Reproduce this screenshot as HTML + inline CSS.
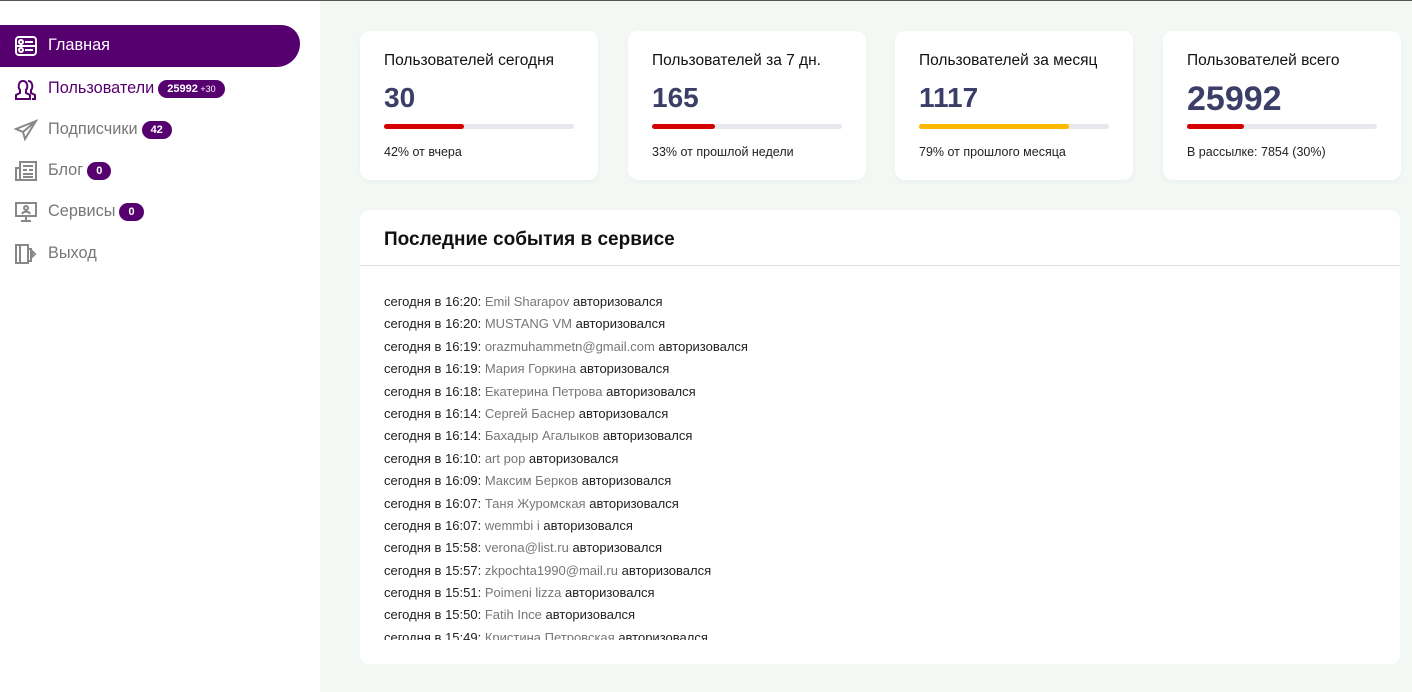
<!DOCTYPE html>
<html><head><meta charset="utf-8"><style>
*{margin:0;padding:0;box-sizing:border-box}
body{width:1412px;height:691px;overflow:hidden;background:#f4f8f5;font-family:"Liberation Sans",sans-serif;position:relative;border-top:1px solid #555}
.side{position:absolute;left:0;top:0;width:320px;height:691px;background:#fff}
.act{position:absolute;left:0;top:24px;width:300px;height:42px;background:#560070;border-radius:0 22px 28px 0;color:#fff}
.nav{position:absolute;left:48px;font-size:16.3px;color:#777;display:flex;align-items:center}
.badge{background:#560070;color:#fff;font-size:11px;font-weight:bold;border-radius:10px;padding:3px 9px;margin-left:4px}
.ic{position:absolute;left:14px;width:24px;height:22px}
.card{position:absolute;top:30px;width:238px;height:149px;background:#fff;border-radius:10px;padding:0 24px;box-shadow:0 2px 6px rgba(0,0,0,.03)}
.card h4{font-weight:normal;font-size:15.5px;color:#111;margin-top:21px}
.card .n{font-size:28px;font-weight:bold;color:#3b3e66;margin-top:12px;height:34px}
.bar{height:5px;background:#e6e8ee;border-radius:3px;margin-top:8px;position:relative}
.bar i{position:absolute;left:0;top:0;height:5px;border-radius:3px}
.card p{font-size:12.5px;color:#222;margin-top:16px}
.big{position:absolute;left:360px;top:209px;width:1040px;height:454px;background:#fff;border-radius:10px;overflow:hidden}
.big h3{font-size:19px;font-weight:bold;color:#111;padding:19px 24px 0;height:56px;border-bottom:1px solid #ddd}
.ev{position:absolute;left:24px;top:84px;height:346px;overflow:hidden;font-size:13px;color:#222}
.ev div{height:22.4px}
.ev span{color:#777}
</style></head><body>
<div class="side">
<div class="act"><svg class="ic" style="top:10px" viewBox="0 0 24 22" fill="none" stroke="#fff" stroke-width="2"><rect x="2" y="2" width="20" height="18" rx="3"/><circle cx="7" cy="7" r="2"/><circle cx="7" cy="15" r="2"/><path d="M11 7h8M11 15h8M3 11h18"/></svg><span style="position:absolute;left:48px;top:11px;font-size:16.3px">Главная</span></div>
<svg class="ic" style="top:77px" viewBox="0 0 24 22" fill="none" stroke="#560070" stroke-width="2"><path d="M2 21v-4l4-2v-3c-2-2-2-9 3-9s5 7 3 9v3l4 2v4zM14 3c5 0 5 7 3 9v3l4 2v4h-3"/></svg>
<div class="nav" style="top:78px;color:#560070">Пользователи<span class="badge">25992<small style="font-weight:normal;font-size:9px"> +30</small></span></div>
<svg class="ic" style="top:118px" viewBox="0 0 24 22" fill="none" stroke="#888" stroke-width="2"><path d="M22 2L2 10l7 3 2 7 3-5zM9 13l13-11"/></svg>
<div class="nav" style="top:119px">Подписчики<span class="badge">42</span></div>
<svg class="ic" style="top:159px" viewBox="0 0 24 22" fill="none" stroke="#888" stroke-width="2"><rect x="6" y="2" width="16" height="18"/><path d="M6 8H2v12h4M9 6h10M9 10h4M15 10h4M9 14h10M9 17h10"/></svg>
<div class="nav" style="top:160px">Блог<span class="badge">0</span></div>
<svg class="ic" style="top:200px" viewBox="0 0 24 22" fill="none" stroke="#888" stroke-width="2"><rect x="2" y="2" width="20" height="13"/><circle cx="12" cy="7" r="2"/><path d="M8 13c1-3 7-3 8 0M12 15v4M7 20h10"/></svg>
<div class="nav" style="top:201px">Сервисы<span class="badge">0</span></div>
<svg class="ic" style="top:242px" viewBox="0 0 24 22" fill="none" stroke="#888" stroke-width="2"><path d="M2 2h12v18H2zM6 3v18M14 6h3v12h-3M18 8l3 3-3 3z"/></svg>
<div class="nav" style="top:243px">Выход</div>
</div>
<div class="card" style="left:360px"><h4>Пользователей сегодня</h4><div class="n">30</div><div class="bar"><i style="width:42%;background:#d50000"></i></div><p>42% от вчера</p></div>
<div class="card" style="left:628px"><h4>Пользователей за 7 дн.</h4><div class="n">165</div><div class="bar"><i style="width:33%;background:#d50000"></i></div><p>33% от прошлой недели</p></div>
<div class="card" style="left:895px"><h4>Пользователей за месяц</h4><div class="n">1117</div><div class="bar"><i style="width:79%;background:#ffb800"></i></div><p>79% от прошлого месяца</p></div>
<div class="card" style="left:1163px"><h4>Пользователей всего</h4><div class="n" style="font-size:34px;margin-top:10px;height:36px">25992</div><div class="bar"><i style="width:30%;background:#d50000"></i></div><p>В рассылке: 7854 (30%)</p></div>
<div class="big"><h3>Последние события в сервисе</h3>
<div class="ev">
<div>сегодня в 16:20: <span>Emil Sharapov</span> авторизовался</div>
<div>сегодня в 16:20: <span>MUSTANG VM</span> авторизовался</div>
<div>сегодня в 16:19: <span>orazmuhammetn@gmail.com</span> авторизовался</div>
<div>сегодня в 16:19: <span>Мария Горкина</span> авторизовался</div>
<div>сегодня в 16:18: <span>Екатерина Петрова</span> авторизовался</div>
<div>сегодня в 16:14: <span>Сергей Баснер</span> авторизовался</div>
<div>сегодня в 16:14: <span>Бахадыр Агалыков</span> авторизовался</div>
<div>сегодня в 16:10: <span>art pop</span> авторизовался</div>
<div>сегодня в 16:09: <span>Максим Берков</span> авторизовался</div>
<div>сегодня в 16:07: <span>Таня Журомская</span> авторизовался</div>
<div>сегодня в 16:07: <span>wemmbi i</span> авторизовался</div>
<div>сегодня в 15:58: <span>verona@list.ru</span> авторизовался</div>
<div>сегодня в 15:57: <span>zkpochta1990@mail.ru</span> авторизовался</div>
<div>сегодня в 15:51: <span>Poimeni lizza</span> авторизовался</div>
<div>сегодня в 15:50: <span>Fatih Ince</span> авторизовался</div>
<div>сегодня в 15:49: <span>Кристина Петровская</span> авторизовался</div>
</div></div>
</body></html>
